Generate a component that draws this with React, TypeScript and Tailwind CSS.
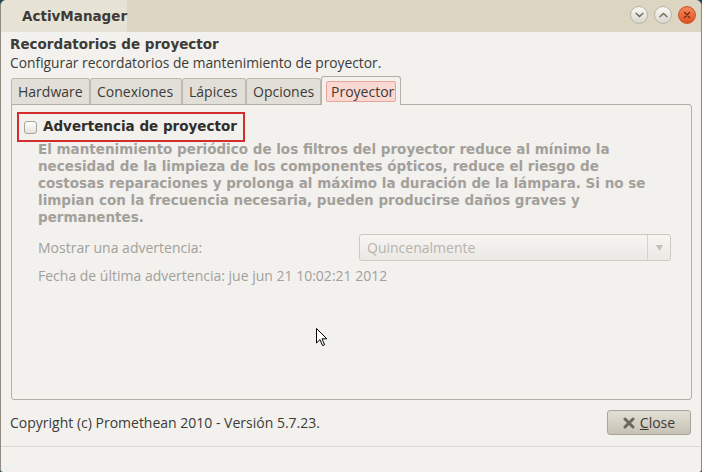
import React from "react";

const ui = { fontFamily: '"Open Sans", "DejaVu Sans", sans-serif' };
const bold = { fontFamily: '"DejaVu Sans", sans-serif' };

function WinBtn({ kind }: { kind: "min" | "max" | "close" }) {
  if (kind === "close") {
    return (
      <div className="w-[18px] h-[18px] rounded-full bg-gradient-to-b from-[#f5885a] to-[#df4f1c] border border-[#c8542a] flex items-center justify-center">
        <svg width="8" height="8" viewBox="0 0 8 8">
          <path d="M1.5 1.5 L6.5 6.5 M6.5 1.5 L1.5 6.5" stroke="#7a2a10" strokeWidth="1.4" strokeLinecap="round" />
        </svg>
      </div>
    );
  }
  return (
    <div className="w-[18px] h-[18px] rounded-full bg-gradient-to-b from-[#fbfaf7] to-[#d9d6cd] border border-[#b9b5a9] flex items-center justify-center">
      <svg width="9" height="6" viewBox="0 0 9 6">
        <path
          d={kind === "min" ? "M1 1.2 L4.5 4.6 L8 1.2" : "M1 4.8 L4.5 1.4 L8 4.8"}
          stroke="#6e6b63"
          strokeWidth="1.4"
          fill="none"
          strokeLinecap="round"
        />
      </svg>
    </div>
  );
}

function Tab({ label, w, active }: { label: string; w: string; active?: boolean }) {
  if (active) {
    return (
      <div className={`${w} h-[29px] -mb-px px-[4px] pt-[4px] bg-[#f2f1ee] border border-b-0 border-[#b3afa5] rounded-t-[3px] relative z-10`}>
        <div className="h-[21px] px-[4px] flex items-center bg-[#fbd8d2] border border-[#e8a49a] rounded-[2px] text-[14px] text-[#3c3b37]">
          {label}
        </div>
      </div>
    );
  }
  return (
    <div className={`${w} h-[26px] px-[6px] flex items-center bg-[#e2dfd8] border border-b-0 border-[#bdb9af] rounded-t-[3px] text-[14px] text-[#3c3b37]`}>
      {label}
    </div>
  );
}

export default function App() {
  return (
    <div className="w-[702px] h-[472px] bg-[#1e4a54] overflow-hidden" style={ui}>
      <div className="w-full h-full flex flex-col bg-[#f2f1ee] rounded-t-[6px] rounded-b-[3px] border-x border-[#8f8b80] relative">
        {/* Title bar */}
        <div className="h-[32px] flex items-stretch bg-[#dbd5c2] rounded-t-[6px] shrink-0">
          <div className="w-[126px] bg-[#e6e2d4] rounded-tl-[6px] flex items-center pl-[21px]">
            <span className="text-[13.5px] font-bold text-[#3c3b37]" style={bold}>ActivManager</span>
          </div>
          <div className="flex-1" />
          <div className="flex items-center gap-[6px] pr-[5px] pb-[2px]">
            <WinBtn kind="min" />
            <WinBtn kind="max" />
            <WinBtn kind="close" />
          </div>
        </div>

        {/* Header */}
        <div className="pl-[9px] pt-[4px]">
          <div className="text-[13.5px] font-bold leading-[17px] text-[#3c3b37]" style={bold}>Recordatorios de proyector</div>
          <div className="text-[13.8px] leading-[19px] text-[#3c3b37]">Configurar recordatorios de mantenimiento de proyector.</div>
        </div>

        {/* Tabs */}
        <div className="ml-[10px] mt-[4px] flex items-end h-[28px]">
          <Tab label="Hardware" w="w-[79px]" />
          <Tab label="Conexiones" w="w-[92px]" />
          <Tab label="Lápices" w="w-[64px]" />
          <Tab label="Opciones" w="w-[75px]" />
          <Tab label="Proyector" w="w-[80px]" active />
        </div>

        {/* Panel */}
        <div className="ml-[10px] mr-[9px] h-[296px] border border-[#b3afa5] rounded-b-[3px] rounded-tr-[3px] bg-[#f2f1ee] relative">
          <div className="ml-[5px] mt-[7px] w-[228px] h-[30px] border-2 border-[#d22e2e] flex items-center pl-[5px] gap-[6px]">
            <div className="w-[13px] h-[13px] rounded-[3px] border border-[#a8a49a] bg-gradient-to-b from-[#ffffff] to-[#e4e2dc]" />
            <span className="text-[13.5px] font-bold text-[#2f2e2b] -mt-px" style={bold}>Advertencia de proyector</span>
          </div>
          <div className="ml-[26px] -mt-px text-[13.5px] font-bold leading-[17px] text-[#a3a09a] whitespace-nowrap" style={bold}>
            <div>El mantenimiento periódico de los filtros del proyector reduce al mínimo la</div>
            <div>necesidad de la limpieza de los componentes ópticos, reduce el riesgo de</div>
            <div>costosas reparaciones y prolonga al máximo la duración de la lámpara. Si no se</div>
            <div>limpian con la frecuencia necesaria, pueden producirse daños graves y</div>
            <div>permanentes.</div>
          </div>
          <div className="ml-[26px] mr-[20px] mt-[8px] flex items-center">
            <span className="text-[14px] text-[#a3a09a]">Mostrar una advertencia:</span>
            <div className="ml-auto w-[312px] h-[27px] rounded-[3px] border border-[#ccc9c1] bg-gradient-to-b from-[#f6f5f2] to-[#ebe9e4] flex items-center">
              <span className="pl-[7px] flex-1 text-[14px] text-[#b6b3ac]">Quincenalmente</span>
              <div className="w-px h-[25px] bg-[#d6d3cb]" />
              <div className="w-[22px] flex justify-center">
                <svg width="7" height="6" viewBox="0 0 7 6"><path d="M0 0 H7 L3.5 6 Z" fill="#c3c0b8" /></svg>
              </div>
            </div>
          </div>
          <div className="ml-[26px] mt-[5px] text-[14px] leading-[19px] text-[#a3a09a]">
            Fecha de última advertencia: jue jun 21 10:02:21 2012
          </div>
          {/* mouse cursor */}
          <svg className="absolute left-[304px] top-[223px]" width="12" height="19" viewBox="0 0 12 19">
            <path d="M0.5 0.5 L0.5 15 L4 11.6 L6.6 17.6 L8.6 16.7 L6 10.8 L10.8 10.8 Z" fill="#ffffff" stroke="#000000" strokeWidth="1" strokeLinejoin="round" />
          </svg>
        </div>

        {/* Footer */}
        <div className="flex items-center pl-[9px] pr-[10px] mt-[10px] h-[25px]">
          <span className="text-[14px] text-[#3c3b37]">Copyright (c) Promethean 2010 - Versión 5.7.23.</span>
          <button className="ml-auto w-[84px] h-[25px] rounded-[3px] border border-[#a9a598] bg-gradient-to-b from-[#e2dfd5] to-[#c6c2b5] flex items-center justify-center gap-[5px] text-[14px] text-[#3c3b37]">
            <svg width="12" height="12" viewBox="0 0 12 12">
              <path d="M2 2 L10 10 M10 2 L2 10" stroke="#6a675f" strokeWidth="3" strokeLinecap="round" />
            </svg>
            <span><span className="underline">C</span>lose</span>
          </button>
        </div>
        <div className="mt-[11px] border-t border-[#dcdad4] flex-1" />
      </div>
    </div>
  );
}
